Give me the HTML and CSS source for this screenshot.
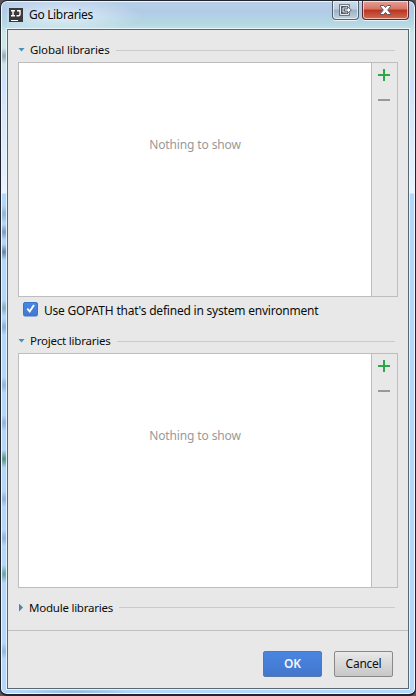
FILE: index.html
```html
<!DOCTYPE html>
<html lang="en">
<head>
<meta charset="utf-8">
<title>Go Libraries</title>
<link rel="stylesheet" href="styles.css">
</head>
<body>
<div class="window">
  <header class="titlebar">
    <svg class="logo" width="14" height="14" viewBox="0 0 14 14"><path fill="#3a3a3c" d="M0 0h14v14H0z"/><path d="M2 2.700h4M4 2.700v5M2 7.700h4M8 2.700h3v3.500q0 1.600-1.600 1.600H7.500" fill="none" stroke="#fff" stroke-width="1.400"/><path fill="#fff" d="M2 12h7v1H2z"/></svg>
    <span class="title t-title">Go Libraries</span>
    <div class="controls">
      <div class="control leave"><svg width="13" height="13" viewBox="0 0 13 13"><path d="M9.500 3.500v-2h-8v9h8v-2M7 4H4v4h3" fill="none" stroke="#555d68" stroke-width="2.600"/><path d="M9.500 3.500v-2h-8v9h8v-2M7 4H4v4h3" fill="none" stroke="#e8edf2"/><path d="M5.500 5h3V2.800L12.300 6 8.500 9.200V7h-3z" fill="#fff" stroke="#555d68" stroke-width=".9"/></svg></div>
      <div class="control close"><svg width="13" height="12" viewBox="0 0 13 12"><path d="M1.500 1.500h3.200l1.800 2 1.800-2h3.200v1.200L8.700 6l2.800 3.300v1.200H8.300l-1.800-2-1.800 2H1.500V9.300L4.300 6 1.500 2.700z" fill="#fff" stroke="#5d5364"/></svg></div>
    </div>
  </header>
  <main class="content">
    <section>
      <div class="heading"><i class="arrow down"></i><span class="t-global">Global libraries</span><i class="rule"></i></div>
      <div class="list">
        <div class="empty"><span class="t-empty">Nothing to show</span></div>
        <div class="tools"><i class="plus"></i><i class="minus"></i></div>
      </div>
    </section>
    <label class="option">
      <svg width="15" height="15" viewBox="0 0 15 15"><defs><linearGradient id="box" x2="0" y2="1"><stop stop-color="#4588e4"/><stop offset="1" stop-color="#4178cf"/></linearGradient></defs><rect x=".5" y=".5" width="14" height="13.500" rx="1.500" fill="url(#box)" stroke="#3a75ca"/><path d="m4.300 6.700 2.400 2.800 4.300-6.500" fill="none" stroke="#fff" stroke-width="1.900"/></svg>
      <span class="t-option">Use GOPATH that's defined in system environment</span>
    </label>
    <section>
      <div class="heading"><i class="arrow down"></i><span class="t-project">Project libraries</span><i class="rule"></i></div>
      <div class="list">
        <div class="empty"><span class="t-empty">Nothing to show</span></div>
        <div class="tools"><i class="plus"></i><i class="minus"></i></div>
      </div>
    </section>
    <section class="collapsed">
      <div class="heading"><i class="arrow right"></i><span class="t-module">Module libraries</span><i class="rule"></i></div>
    </section>
    <footer class="actions">
      <button class="button primary"><span class="t-ok">OK</span></button>
      <button class="button"><span class="t-cancel">Cancel</span></button>
    </footer>
  </main>
</div>
</body>
</html>
```
FILE: styles.css
```css
* { box-sizing: border-box; }
html { height: 100%; background: #55555c; }
body {
  margin: 0;
  width: 416px;
  height: 696px;
  overflow: hidden;
  font: 12px/18px "Noto Sans", "Open Sans", sans-serif;
  color: #0c0c0c;
}
.window {
  display: flex;
  flex-direction: column;
  height: 696px;
  padding: 0 6px 5px 6px;
  border: 1px solid #20242c;
  border-bottom-width: 2px;
  border-radius: 7px;
  box-shadow: inset 0 0 0 1px #edf6ff;
  background:
    radial-gradient(ellipse 6px 8px at 3px 55px, #8fa9ad, transparent),
    radial-gradient(ellipse 6px 9px at 3px 213px, #8fb1d2, transparent),
    radial-gradient(ellipse 6px 8px at 3px 231px, #7797bb, transparent),
    radial-gradient(ellipse 6px 8px at 3px 251px, #607d9d, transparent),
    radial-gradient(ellipse 6px 8px at 3px 307px, #80adb8, transparent),
    radial-gradient(ellipse 6px 8px at 3px 326px, #88aad2, transparent),
    radial-gradient(ellipse 6px 8px at 3px 384px, #8eb0da, transparent),
    radial-gradient(ellipse 6px 8px at 3px 422px, #8eb0da, transparent),
    radial-gradient(ellipse 6px 9px at 3px 458px, #51907c, transparent),
    radial-gradient(ellipse 6px 8px at 3px 498px, #8eb0da, transparent),
    radial-gradient(ellipse 6px 8px at 3px 537px, #8eb0da, transparent),
    radial-gradient(ellipse 6px 9px at 3px 573px, #65a19b, transparent),
    radial-gradient(ellipse 6px 8px at 3px 650px, #91b4dc, transparent),
    radial-gradient(ellipse 60px 3px at 75px 691px, #91b9dc, transparent),
    linear-gradient(#b8cfe8, #b1cbe6 10px, #b5d8e2 23px, #cce7e9 32px, #cde5e8 68px, #cce2fb 80px, #eaf3ff 192px, #b3d6fb 193px, #b5d7fb);
}
.titlebar {
  display: flex;
  align-items: flex-start;
  flex: 0 0 28px;
  padding-left: 2px;
  background: radial-gradient(ellipse 80px 18px at 55px 15px, rgba(240,249,255,.72), transparent);
}
.logo { margin-top: 7px; flex: none; }
.title { margin: 5px auto 0 6px; }
.controls { display: flex; gap: 3px; }
.control {
  display: flex;
  align-items: center;
  justify-content: center;
  height: 19px;
  border: 1px solid #53606e;
  border-top: 0;
  border-radius: 0 0 4px 4px;
  box-shadow: inset 0 0 0 1px rgba(255,255,255,.6), 0 1px 0 rgba(255,255,255,.7);
}
.leave { width: 27px; background: linear-gradient(#ccdcea, #bccddd 45%, #9eb1c4 50%, #bdd2de); }
.close { width: 47px; border-color: #582a34; background: linear-gradient(#e7a197, #d77465 45%, #b93420 50%, #d26b50); }
.content {
  display: flex;
  flex-direction: column;
  flex: 1;
  border: 1px solid #596773;
  outline: 1px solid rgba(239,248,255,.85);
  background: #e8e8e8;
}
.heading {
  display: flex;
  align-items: center;
  height: 32px;
  padding: 8px 13px 0 10px;
}
.heading span { font-size: 11.5px; }
.arrow { flex: none; }
.down { width: 12px; height: 4px; background: #3f94bd; clip-path: polygon(0 0, 7px 0, 3.5px 4px); margin-top: -1px; }
.right { width: 11px; height: 8px; background: #3f88b3; clip-path: polygon(1px 0, 5px 4px, 1px 8px); }
.rule { flex: 1; height: 1px; margin-left: 6px; background: #cacaca; }
.list {
  display: flex;
  height: 235px;
  margin: 0 10px;
  border: 1px solid #bdbdbd;
  background: #fff;
}
.empty { flex: 1; padding: 73px 0 0; text-align: center; color: #999; }
.tools {
  display: flex;
  flex-direction: column;
  width: 26px;
  padding: 6px 0 0 6px;
  border-left: 1px solid #bdbdbd;
  background: #e8e8e8;
}
.plus {
  width: 12px;
  height: 12px;
  background: linear-gradient(#2aa84a, #2aa84a) 0 5px / 12px 2px no-repeat, linear-gradient(#2aa84a, #2aa84a) 5px 0 / 2px 12px no-repeat;
}
.minus { width: 12px; height: 2px; margin-top: 18px; background: #999; }
.option { display: flex; gap: 6px; height: 24px; padding: 5px 15px 0; line-height: 17px; }
.option svg { flex: none; }
.collapsed { height: 42px; }
.collapsed .heading { padding-top: 7px; }
.actions {
  display: flex;
  justify-content: flex-end;
  gap: 12px;
  flex: 1;
  padding: 20px 15px 0;
  border-top: 1px solid #bfbfbf;
}
.button {
  width: 59px;
  height: 26px;
  padding: 0;
  border: 1px solid #898989;
  border-radius: 2px;
  background: linear-gradient(#e9e9e9, #c7c7c7);
  font: inherit;
  color: #111;
}
.primary { border-color: #5878aa; background: linear-gradient(#4986e1, #4376cd); color: #f1f5fc; font-weight: 600; }
span { white-space: nowrap; }
.t-title { letter-spacing: -.33px; }
.t-global { letter-spacing: -.12px; }
.t-project { letter-spacing: -.22px; }
.t-module { letter-spacing: -.23px; }
.t-empty { letter-spacing: -.13px; }
.t-option { letter-spacing: -.21px; }
.t-cancel { letter-spacing: -.25px; }
```
